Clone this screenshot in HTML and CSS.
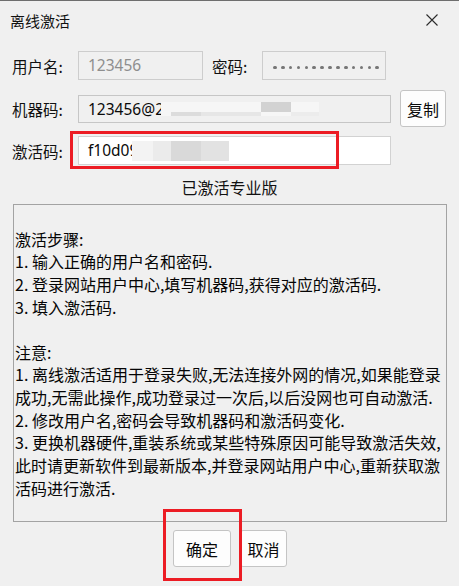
FILE: index.html
```html
<!DOCTYPE html>
<html lang="zh-CN">
<head>
<meta charset="utf-8">
<title>离线激活</title>
<link rel="stylesheet" href="styles.css">
</head>
<body>
<div class="win">
  <div class="titlebar">
    <span class="title">离线激活</span>
    <svg class="close" width="12" height="12" viewBox="0 0 12 12"><path d="M0.5 0.5 L11.5 11.5 M11.5 0.5 L0.5 11.5" stroke="#2b2b2b" stroke-width="1.1" fill="none"/></svg>
  </div>
  <div class="form">
    <div class="row r1">
      <span class="label">用户名:</span>
      <div class="field f-user">123456</div>
      <span class="label2">密码:</span>
      <div class="field f-pass">
        <span class="dot"></span><span class="dot"></span><span class="dot"></span><span class="dot"></span><span class="dot"></span><span class="dot"></span><span class="dot"></span><span class="dot"></span><span class="dot"></span><span class="dot"></span><span class="dot"></span><span class="dot"></span><span class="dot"></span><span class="dot"></span>
      </div>
    </div>
    <div class="row r2">
      <span class="label">机器码:</span>
      <div class="field f-machine">123456@2
        <span class="blur m-a"></span><span class="blur m-b"></span><span class="blur m-c"></span><span class="blur m-d"></span><span class="blur m-e"></span>
      </div>
      <button class="btn copy">复制</button>
    </div>
    <div class="row r3">
      <span class="label">激活码:</span>
      <div class="field f-code">f10d09
        <span class="blur c-a"></span><span class="blur c-b"></span><span class="blur c-c"></span><span class="blur c-d"></span>
      </div>
      <span class="hl hl-code"></span>
    </div>
  </div>
  <div class="status">已激活专业版</div>
  <div class="notes">
    <div class="line">&nbsp;</div>
    <div class="line">激活步骤:</div>
    <div class="line">1. 输入正确的用户名和密码.</div>
    <div class="line">2. 登录网站用户中心,填写机器码,获得对应的激活码.</div>
    <div class="line">3. 填入激活码.</div>
    <div class="line">&nbsp;</div>
    <div class="line">注意:</div>
    <div class="line">1. 离线激活适用于登录失败,无法连接外网的情况,如果能登录</div>
    <div class="line">成功,无需此操作,成功登录过一次后,以后没网也可自动激活.</div>
    <div class="line">2. 修改用户名,密码会导致机器码和激活码变化.</div>
    <div class="line">3. 更换机器硬件,重装系统或某些特殊原因可能导致激活失效,</div>
    <div class="line">此时请更新软件到最新版本,并登录网站用户中心,重新获取激</div>
    <div class="line">活码进行激活.</div>
  </div>
  <div class="actions">
    <div class="btngroup">
      <button class="btn ok">确定</button>
      <button class="btn cancel">取消</button>
      <span class="hl hl-ok"></span>
    </div>
  </div>
</div>
</body>
</html>
```

FILE: styles.css
```css
* { box-sizing: border-box; }
html, body {
  margin: 0;
  padding: 0;
  background: #f0f0f0;
}
body {
  font-family: "Noto Sans", "Noto Sans CJK SC", sans-serif;
  color: #111;
  width: 459px;
  height: 586px;
  overflow: hidden;
}
.win {
  border-top: 1px solid #6e6e6e;
  height: 586px;
}
.titlebar {
  height: 38px;
  display: flex;
  align-items: center;
  justify-content: space-between;
  padding: 0 21px 0 10px;
}
.title {
  font-family: "Noto Sans CJK SC", sans-serif;
  font-size: 15px;
}
.close { display: block; }
.form {
  padding-left: 12px;
  margin-top: 12px;
}
.row {
  display: flex;
  align-items: center;
  position: relative;
}
.r2 { margin-top: 10px; height: 37px; }
.r3 { margin-top: 9px; }
.label {
  width: 66px;
  font-family: "Noto Sans CJK SC", sans-serif;
  font-size: 15.5px;
}
.label2 {
  width: 50px;
  margin-left: 9px;
  font-family: "Noto Sans CJK SC", sans-serif;
  font-size: 15.5px;
}
.field {
  position: relative;
  height: 29px;
  border: 1px solid #cdcdcd;
  background: #f0f0f0;
  font-size: 15.5px;
  line-height: 27px;
  padding-left: 9px;
  white-space: nowrap;
  overflow: hidden;
}
.f-user { width: 125px; color: #8e8e8e; }
.f-pass {
  width: 124px;
  display: flex;
  align-items: center;
  gap: 4.2px;
  padding: 4px 0 0 10px;
}
.dot {
  width: 3.7px;
  height: 3.7px;
  border-radius: 50%;
  background: #767676;
  flex: none;
}
.f-machine {
  width: 313px;
  height: 28px;
  line-height: 26px;
  border-color: #c6c6c6;
  color: #0a0a0a;
}
.f-code {
  width: 313px;
  background: #fff;
  border-color: #d2d2d2;
  color: #0a0a0a;
}
.blur { position: absolute; display: block; }
.m-a { left: 82px; top: 6px; width: 158px; height: 14px; background: #f6f6f6; }
.m-b { left: 92px; top: 16px; width: 30px; height: 4px; background: #dcdcdc; }
.m-c { left: 122px; top: 16px; width: 60px; height: 4px; background: #e6e6e6; }
.m-d { left: 182px; top: 6px; width: 30px; height: 10px; background: #d2d2d2; }
.m-e { left: 212px; top: 16px; width: 28px; height: 4px; background: #ececec; }
.c-a { left: 53px; top: 4px; width: 21px; height: 20px; background: #f3f3f3; }
.c-b { left: 74px; top: 4px; width: 18px; height: 20px; background: #ebebeb; }
.c-c { left: 92px; top: 4px; width: 30px; height: 20px; background: #d9d9d9; }
.c-d { left: 122px; top: 4px; width: 28px; height: 20px; background: #e2e2e2; }
.btn {
  font-family: "Noto Sans CJK SC", sans-serif;
  font-size: 16px;
  color: #0a0a0a;
  background: #fdfdfd;
  border: 1px solid #c4c4c4;
  border-radius: 3px;
  height: 37px;
  padding: 0;
  margin: 0;
}
.copy { width: 46px; margin-left: 9px; }
.hl {
  position: absolute;
  display: block;
  border: 3px solid #ec1c24;
  pointer-events: none;
}
.hl-code { left: 58px; top: -5px; width: 269px; height: 38px; }
.status {
  margin-top: 11px;
  height: 22px;
  line-height: 22px;
  text-align: center;
  font-family: "Noto Sans CJK SC", sans-serif;
  font-size: 16px;
}
.notes {
  margin: 6px 12px 0 13px;
  height: 318px;
  border: 1px solid #a3a3a3;
  padding: 0 0 0 1px;
  font-family: "Noto Sans CJK SC", sans-serif;
  font-size: 16px;
  line-height: 22.64px;
  color: #050505;
  white-space: nowrap;
  overflow: hidden;
}
.actions {
  margin-top: 8px;
  display: flex;
  justify-content: center;
}
.btngroup {
  position: relative;
  display: flex;
  gap: 9px;
  margin-left: 1px;
}
.ok { width: 58px; }
.cancel { width: 47px; }
.hl-ok { left: -10px; top: -21px; width: 79px; height: 72px; }
```
